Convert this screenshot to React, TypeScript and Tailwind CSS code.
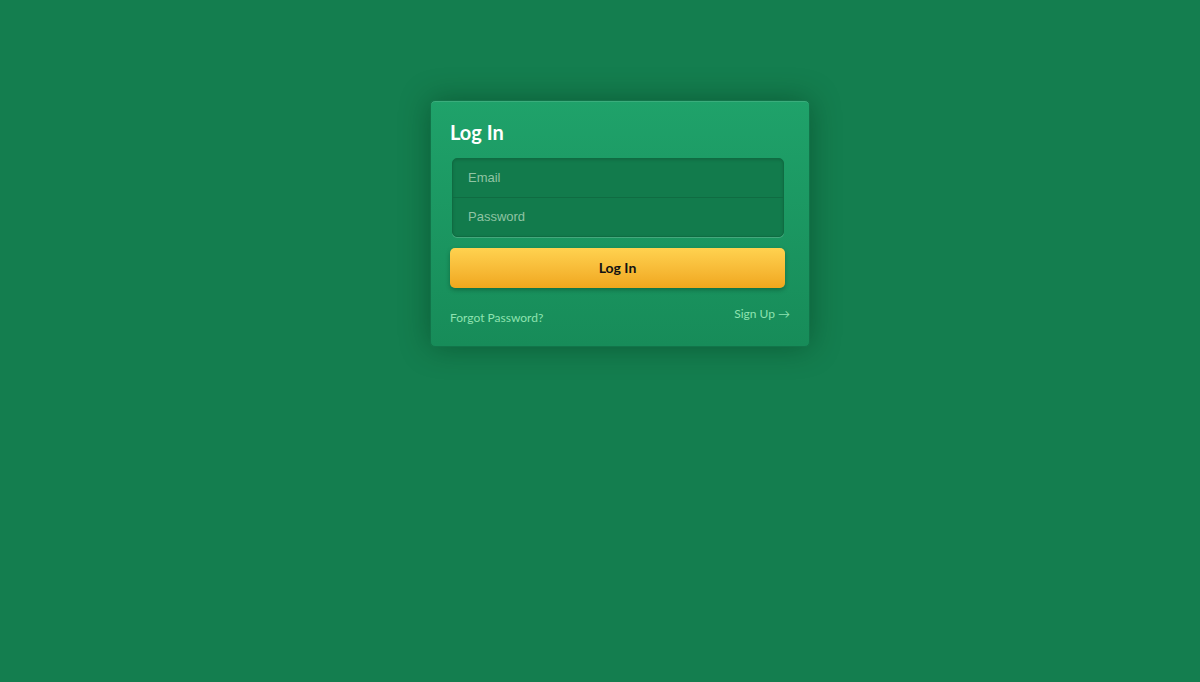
export default function App() {
  return (
    <div className="flex min-h-screen w-full justify-center bg-[#147e4f] pl-[40px] pt-[100px]">
      {/* Login card */}
      <div className="h-fit w-[380px] rounded-[5px] border border-[#12754a] bg-gradient-to-b from-[#1fa26a] to-[#178c59] px-[19px] pt-[16px] pb-[19px] shadow-[0_0_30px_rgba(0,50,25,0.45),inset_0_1px_0_rgba(255,255,255,0.12)]">
        <h1 className="font-['Lato','Noto_Sans',sans-serif] text-[20px] font-bold leading-[30px] text-white">
          Log In
        </h1>

        <div className="ml-[2px] mt-[11px] w-[332px] overflow-hidden rounded-[5px] border border-[#0f6c42] bg-[#127b4c] shadow-[inset_0_1px_3px_rgba(0,0,0,0.15),0_1px_0_rgba(255,255,255,0.18)]">
          <div className="flex h-[39px] items-center border-b border-[#0f6c42] px-[15px] pb-[1px] font-['Liberation_Sans',Arial,sans-serif] text-[13px] text-[#8fc4a3]">
            Email
          </div>
          <div className="flex h-[38px] items-center px-[15px] pb-[1px] font-['Liberation_Sans',Arial,sans-serif] text-[13px] text-[#8fc4a3]">
            Password
          </div>
        </div>

        <button className="mt-[11px] flex h-[40px] w-[335px] items-center justify-center rounded-[5px] bg-gradient-to-b from-[#ffd24f] to-[#f0a71c] pb-[1px] font-['Lato','Noto_Sans',sans-serif] text-[14px] font-bold text-[#111] shadow-[0_2px_4px_rgba(0,40,20,0.35)]">
          Log In
        </button>

        <div className="mt-[17px] flex items-start justify-between font-['Lato','Noto_Sans',sans-serif] text-[12px] text-[#8ee3b0]">
          <span className="mt-[4px]">Forgot Password?</span>
          <span>Sign Up →</span>
        </div>
      </div>
    </div>
  );
}
